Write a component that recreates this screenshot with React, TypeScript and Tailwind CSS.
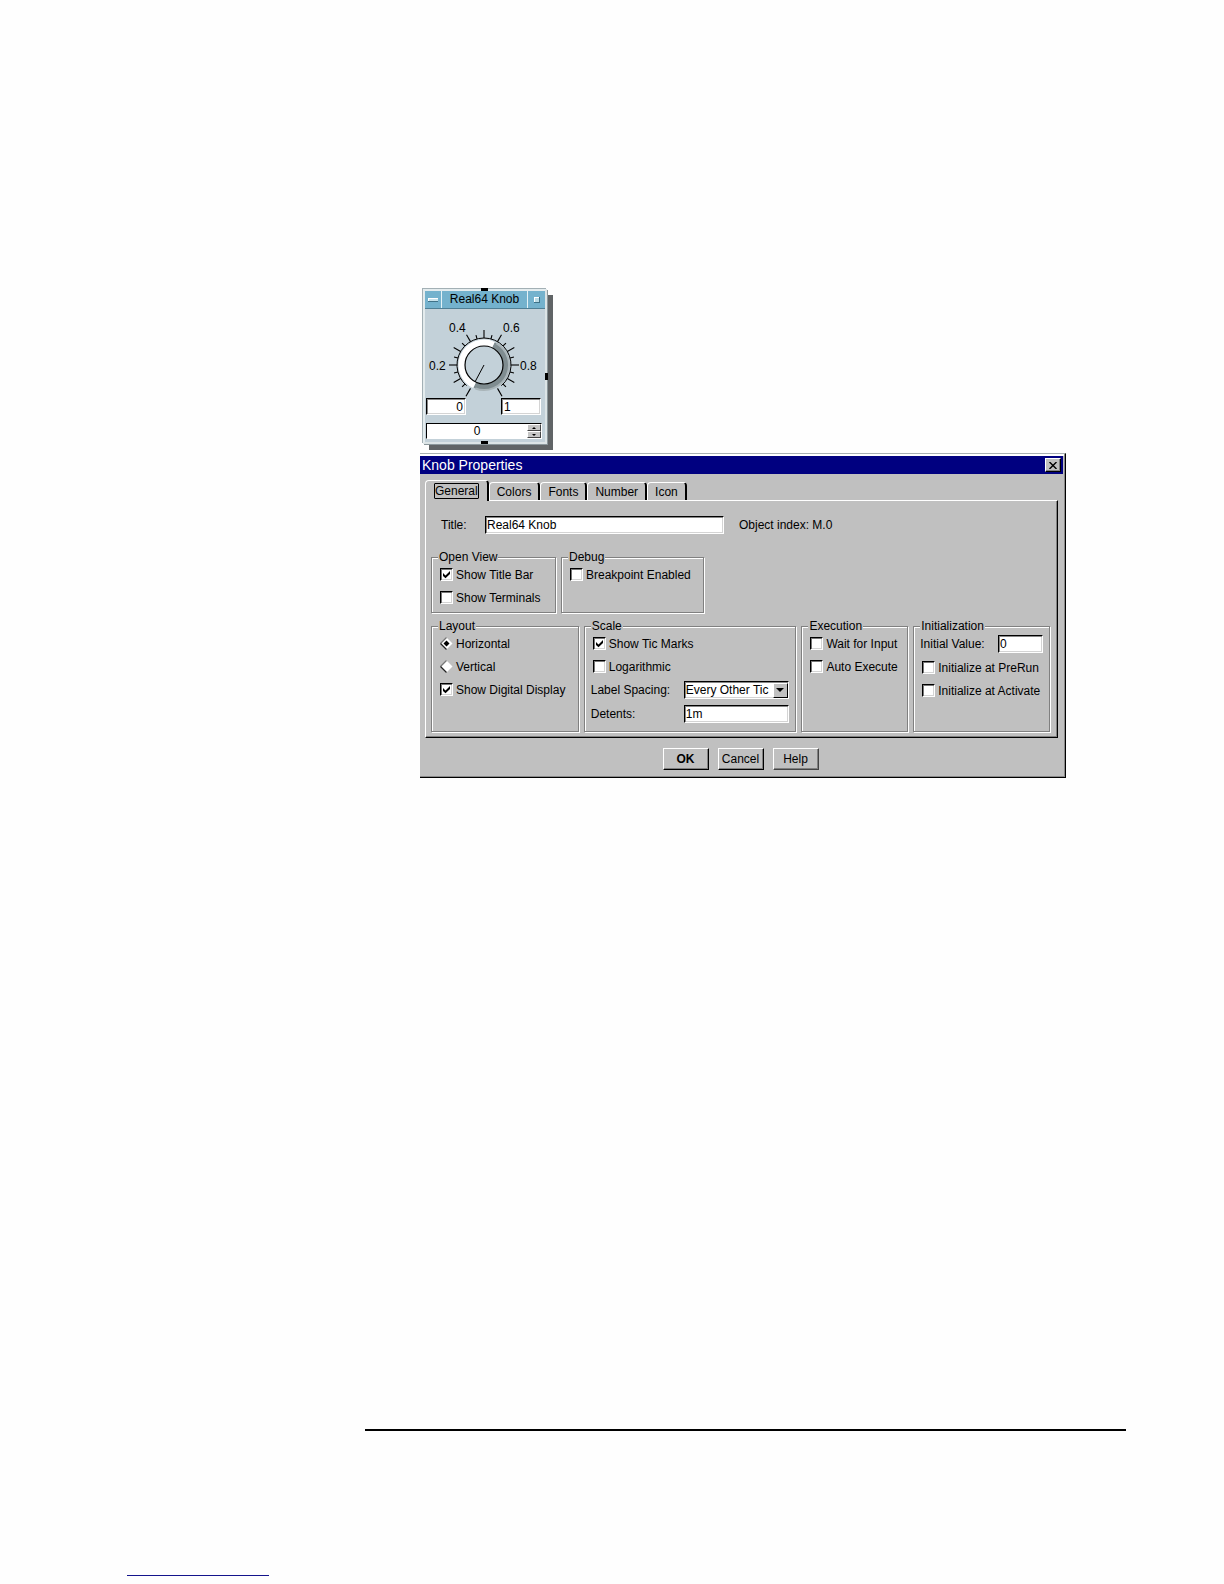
import React, { useState } from "react";

const FIELD =
  "bg-white border border-t-black border-l-black border-r-white border-b-white shadow-[inset_1px_1px_0_#888,inset_-1px_-1px_0_#d4d4d4] outline-none text-xs leading-3 text-black";

const TIC_LABELS = [
  { text: "0.2", x: 4, y: 61 },
  { text: "0.4", x: 24, y: 23 },
  { text: "0.6", x: 78, y: 23 },
  { text: "0.8", x: 95, y: 61 },
];

const CX = 59;
const CY = 56;

// angle is measured clockwise from twelve o'clock
const point = (angle: number, r: number) => {
  const a = (angle * Math.PI) / 180;
  return { x: CX + r * Math.sin(a), y: CY - r * Math.cos(a) };
};

const arc = (from: number, to: number, r: number) => {
  const p = point(from, r);
  const q = point(to, r);
  const large = to - from > 180 ? 1 : 0;
  return `M${p.x} ${p.y}A${r} ${r} 0 ${large} 1 ${q.x} ${q.y}`;
};

const Dial: React.FC = () => {
  const tics = Array.from({ length: 21 }, (_, i) => -150 + i * 15);
  const needle = point(-152, 19);

  return (
    <svg viewBox="0 0 120 89" className="block w-[120px] h-[89px]">
      <path d={arc(25, 205, 22)} fill="none" stroke="#7f8c90" strokeWidth="6" />
      <path d={arc(30, 200, 25)} fill="none" stroke="#a9b4b8" strokeWidth="2" />
      <path d={arc(-155, 25, 22)} fill="none" stroke="#ffffff" strokeWidth="7" />
      <path d={arc(-140, 140, 27)} fill="none" stroke="#000" strokeWidth="1" />
      <circle cx={CX} cy={CY} r="19" fill="#c3d1d9" stroke="#000" strokeWidth="1.2" />
      {tics.map((angle, i) => {
        const a = point(angle, 27);
        const b = point(angle, i % 20 === 0 ? 36 : i % 2 === 0 ? 35 : 31);
        return <line key={angle} x1={a.x} y1={a.y} x2={b.x} y2={b.y} stroke="#000" strokeWidth="1.1" />;
      })}
      <line x1={CX} y1={CY} x2={needle.x} y2={needle.y} stroke="#000" strokeWidth="1" />
      {TIC_LABELS.map(({ text, x, y }) => (
        <text key={text} x={x} y={y} fontSize="12" fill="#000">
          {text}
        </text>
      ))}
    </svg>
  );
};

const KnobObject: React.FC = () => (
  <section className="relative ml-[3px] w-[124px] border-2 border-t-[#e4ecee] border-l-[#e4ecee] border-r-[#dce4e6] border-b-[#dce4e6] bg-[#c3d1d9] shadow-[-1px_-1px_0_#a3b0b5,1px_1px_0_#8b979b,6px_6px_0_#606466]">
    {/* Pins on the edges */}
    <span className="absolute -top-[3px] left-[56px] w-[7px] h-[3px] bg-black" />
    <span className="absolute top-[82px] -right-[3px] w-[3px] h-[7px] bg-black" />
    <span className="absolute -bottom-[2px] left-[56px] w-[7px] h-[3px] bg-black" />

    <header className="flex h-[18px] bg-[#74b2cd] border-b border-[#4f7f95]">
      <button aria-label="Object menu" className="flex items-center justify-center w-[17px] border-r border-[#e4f2f6]">
        <svg viewBox="0 0 10 4" className="w-[10px] h-1">
          <path d="M0 0h10v1H1v2H0z" fill="#fff" />
          <path d="M1 3V1h9v2z" fill="#c9e3ec" />
          <path d="M0 3h10v1H0z" fill="#3f7288" />
        </svg>
      </button>
      <h2 className="flex-1 text-center text-xs leading-[17px] whitespace-nowrap">Real64 Knob</h2>
      <button aria-label="Minimize" className="flex items-center justify-center w-[18px] border-l border-[#e4f2f6]">
        <svg viewBox="0 0 6 6" className="w-[6px] h-[6px]">
          <path d="M0 0h6v6H0z" fill="#3f7288" />
          <path d="M0 0h5v5H0z" fill="#fff" />
          <path d="M1 1h4v4H1z" fill="#b9dbe6" />
        </svg>
      </button>
    </header>

    <Dial />

    <div className="flex justify-between pl-px pr-1">
      <input aria-label="Minimum" defaultValue="0" className={`${FIELD} w-10 h-[17px] px-0.5 text-right`} />
      <input aria-label="Maximum" defaultValue="1" className={`${FIELD} w-10 h-[17px] px-0.5`} />
    </div>
    <div className="flex mt-2 mb-[3px] ml-px mr-[3px] h-4 bg-white border border-t-black border-l-black border-r-white border-b-white">
      <input aria-label="Value" defaultValue="0" className="flex-1 min-w-0 text-center text-xs leading-3 outline-none" />
      <div className="flex flex-col w-[14px]">
        <button aria-label="Increase" className="flex-1 flex items-center justify-center bg-[#c6c6c6] border border-t-white border-l-white border-r-[#444] border-b-[#444]">
          <svg viewBox="0 0 4 2" className="w-1 h-0.5">
            <path d="M2 0l2 2H0z" />
          </svg>
        </button>
        <button aria-label="Decrease" className="flex-1 flex items-center justify-center bg-[#c6c6c6] border border-t-white border-l-white border-r-[#444] border-b-[#444]">
          <svg viewBox="0 0 4 2" className="w-1 h-0.5">
            <path d="M2 2l2-2H0z" />
          </svg>
        </button>
      </div>
    </div>
  </section>
);

interface GroupProps {
  title: string;
  className?: string;
  children: React.ReactNode;
}

const Group: React.FC<GroupProps> = ({ title, className = "", children }) => (
  <fieldset
    className={`min-w-0 border border-[#808080] px-1.5 shadow-[1px_1px_0_#fff,inset_1px_1px_0_#fff] ${className}`}
  >
    <legend className="bg-[#c0c0c0] px-px leading-3">{title}</legend>
    {children}
  </fieldset>
);

interface ToggleProps {
  label: string;
  checked?: boolean;
}

const Check: React.FC<ToggleProps> = ({ label, checked = false }) => (
  <label className="flex items-center gap-[3px] h-[23px] pl-0.5 whitespace-nowrap">
    <span className="grid shrink-0">
      <input
        type="checkbox"
        defaultChecked={checked}
        className="peer col-start-1 row-start-1 appearance-none w-[13px] h-[13px] bg-white border border-t-black border-l-black border-r-white border-b-white shadow-[inset_1px_1px_0_#777,inset_-1px_-1px_0_#d4d4d4]"
      />
      <svg
        viewBox="0 0 13 13"
        className="col-start-1 row-start-1 w-[13px] h-[13px] invisible peer-checked:visible pointer-events-none"
      >
        <path d="M3 5l2.5 2.5L10 3v3L5.500 10.200 3 8z" fill="#000" />
      </svg>
    </span>
    {label}
  </label>
);

const Radio: React.FC<ToggleProps> = ({ label, checked = false }) => (
  <label className="flex items-center gap-[3px] h-[23px] pl-0.5 whitespace-nowrap">
    <span className="grid shrink-0">
      <input
        type="radio"
        name="layout"
        defaultChecked={checked}
        className="peer col-start-1 row-start-1 appearance-none w-[13px] h-[13px]"
      />
      <svg
        viewBox="0 0 13 13"
        className="col-start-1 row-start-1 w-[13px] h-[13px] pointer-events-none [&>.dot]:invisible peer-checked:[&>.dot]:visible"
      >
        <path d="M6.500 0.500l6 6-6 6-6-6z" fill="#fff" />
        <path d="M0.500 6.500l6-6" fill="none" stroke="#777" strokeWidth="1.200" />
        <path d="M0.500 6.500l6 6" fill="none" stroke="#222" strokeWidth="1.200" />
        <path className="dot" d="M6.500 3.500l3 3-3 3-3-3z" fill="#000" />
      </svg>
    </span>
    {label}
  </label>
);

const TABS = ["General", "Colors", "Fonts", "Number", "Icon"];

const PropertiesDialog: React.FC = () => {
  const [active, setActive] = useState("General");

  return (
    <section
      role="dialog"
      aria-labelledby="dialog-title"
      className="mt-[9px] bg-[#c0c0c0] border-t border-r border-b border-t-[#a8b0b2] border-r-black border-b-black shadow-[inset_-1px_-1px_0_#8a8a8a]"
    >
      {/* Title bar */}
      <div className="border-t-2 border-white pr-px mr-px">
        <header className="flex items-center justify-between h-[18px] bg-[#000080] pl-0.5 pr-0.5 text-white">
          <h1 id="dialog-title" className="text-sm leading-[18px]">
            Knob Properties
          </h1>
          <button
            aria-label="Close"
            className="flex items-center justify-center w-4 h-[14px] bg-[#c0c0c0] border border-t-white border-l-white border-r-black border-b-black shadow-[inset_-1px_-1px_0_#808080]"
          >
            <svg viewBox="0 0 8 7" className="w-2 h-[7px]">
              <path d="M0.500 0l7 7M7.500 0l-7 7" stroke="#000" strokeWidth="1.400" />
            </svg>
          </button>
        </header>
      </div>

      {/* Tabs */}
      <div role="tablist" className="flex items-end h-[26px] pl-[5px]">
        {TABS.map((tab) => (
          <button
            key={tab}
            role="tab"
            aria-selected={tab === active}
            onClick={() => setActive(tab)}
            className={
              tab === active
                ? "relative -mb-px h-[21px] px-2 pb-px bg-[#c0c0c0] border-t border-l border-r-2 border-t-white border-l-white border-r-black rounded-t-sm"
                : "h-[18px] px-[7px] border-t border-l border-r-2 border-t-white border-l-white border-r-black rounded-t-sm"
            }
          >
            {tab === active ? (
              <span className="block border border-black rounded-[1px] leading-[14px]">{tab}</span>
            ) : (
              tab
            )}
          </button>
        ))}
      </div>

      <div className="ml-[5px] mr-[7px] border border-t-white border-l-white border-r-black border-b-black shadow-[inset_-1px_-1px_0_#808080] pt-[15px] pl-[5px] pr-[7px] pb-[5px]">
        <div className="flex items-center pl-[10px]">
          <label htmlFor="title" className="w-11">
            Title:
          </label>
          <input id="title" defaultValue="Real64 Knob" className={`${FIELD} w-[239px] h-[18px] px-px`} />
          <span className="ml-[15px]">Object index: M.0</span>
        </div>

        <div className="flex gap-[5px] mt-[17px]">
          <Group title="Open View" className="w-[125px] pb-[3px]">
            <Check label="Show Title Bar" checked />
            <Check label="Show Terminals" />
          </Group>
          <Group title="Debug" className="w-[143px] pb-[3px]">
            <Check label="Breakpoint Enabled" />
          </Group>
        </div>

        <div className="grid grid-cols-[148fr_213fr_107fr_137fr] gap-[5px] mt-[7px]">
          <Group title="Layout" className="pb-[5px]">
            <Radio label="Horizontal" checked />
            <Radio label="Vertical" />
            <Check label="Show Digital Display" checked />
          </Group>

          <Group title="Scale" className="pb-[5px]">
            <Check label="Show Tic Marks" checked />
            <Check label="Logarithmic" />
            <div className="flex items-center h-6">
              <label htmlFor="spacing" className="w-[93px]">
                Label Spacing:
              </label>
              <div className="grid w-[105px]">
                <select
                  id="spacing"
                  className={`${FIELD} col-start-1 row-start-1 appearance-none w-full h-[18px] pl-px leading-4`}
                >
                  <option>Every Other Tic</option>
                  <option>Every Tic</option>
                </select>
                <span className="col-start-1 row-start-1 self-center justify-self-end mr-px flex items-center justify-center w-[15px] h-[15px] bg-[#c0c0c0] border border-t-white border-l-white border-r-black border-b-black pointer-events-none">
                  <svg viewBox="0 0 8 4" className="w-2 h-1">
                    <path d="M0 0h8L4 4z" />
                  </svg>
                </span>
              </div>
            </div>
            <div className="flex items-center h-6">
              <label htmlFor="detents" className="w-[93px]">
                Detents:
              </label>
              <input id="detents" defaultValue="1m" className={`${FIELD} w-[105px] h-[18px] px-px`} />
            </div>
          </Group>

          <Group title="Execution" className="pb-[5px]">
            <Check label="Wait for Input" />
            <Check label="Auto Execute" />
          </Group>

          <Group title="Initialization" className="pb-[5px]">
            <div className="flex items-center justify-between h-6">
              <label htmlFor="initial">Initial Value:</label>
              <input id="initial" defaultValue="0" className={`${FIELD} w-[45px] h-[18px] px-px`} />
            </div>
            <Check label="Initialize at PreRun" />
            <Check label="Initialize at Activate" />
          </Group>
        </div>
      </div>

      <footer className="flex justify-center gap-[9px] pt-[10px] pb-[7px] pr-1">
        <button className="w-[46px] h-[22px] border border-t-white border-l-white border-r-black border-b-black shadow-[inset_-1px_-1px_0_#808080] font-bold">
          OK
        </button>
        <button className="w-[46px] h-[22px] border border-t-white border-l-white border-r-black border-b-black shadow-[inset_-1px_-1px_0_#808080]">
          Cancel
        </button>
        <button className="w-[46px] h-[22px] border border-t-white border-l-white border-r-[#444] border-b-[#444] shadow-[inset_-1px_-1px_0_#808080]">
          Help
        </button>
      </footer>
    </section>
  );
};

const App: React.FC = () => (
  <div className="flex flex-col min-h-screen bg-[#fefefe] text-black text-xs font-['Liberation_Sans',Arial,sans-serif]">
    <main className="flex-1 pt-[289px] pl-[420px] pr-[158px]">
      <KnobObject />
      <PropertiesDialog />
    </main>

    {/* Page foot */}
    <footer>
      <hr className="ml-[365px] mr-[98px] border-0 h-0.5 bg-black" />
      <hr className="mt-36 mb-2 ml-[127px] w-[142px] border-0 h-px bg-[#14148c]" />
    </footer>
  </div>
);

export default App;
